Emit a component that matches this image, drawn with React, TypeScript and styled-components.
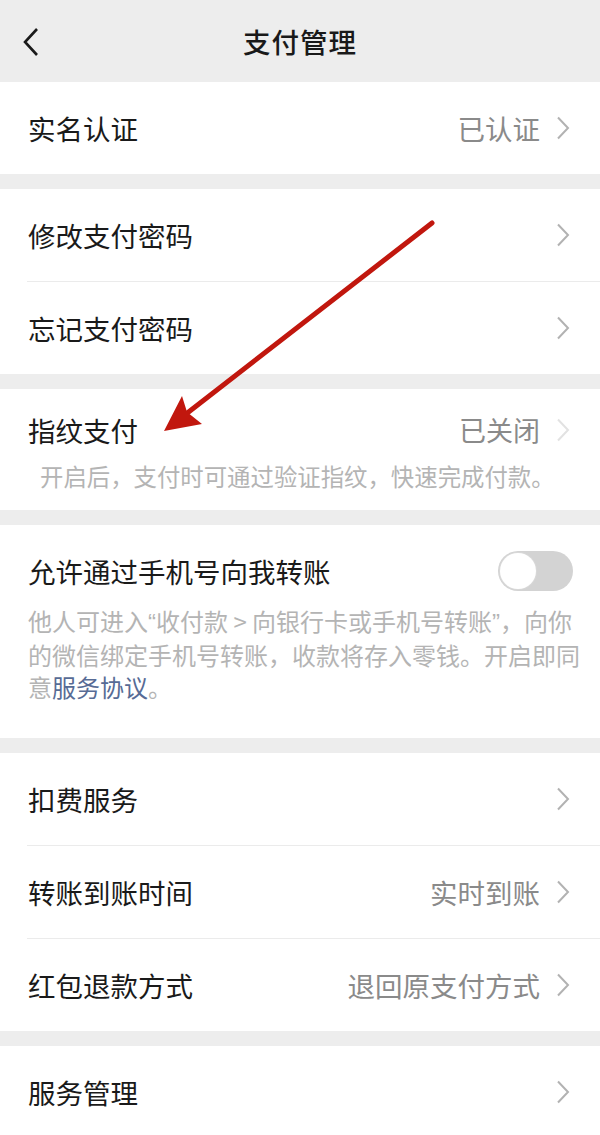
import React from "react";
import styled, { createGlobalStyle } from "styled-components";

const Global = createGlobalStyle`
  html, body { margin: 0; padding: 0; background: #ededed; }
  body { font-family: "Noto Sans CJK SC", "Noto Sans", "Liberation Sans", sans-serif; }
  * { box-sizing: border-box; }
`;

const Page = styled.div`
  position: relative;
  width: 600px;
  min-height: 1135px;
  background: #ededed;
  overflow: hidden;
`;

const Header = styled.div`
  height: 82px;
  display: grid;
  grid-template-columns: 80px 1fr 80px;
  align-items: center;
  background: #ededed;
`;

const BackBtn = styled.div`
  display: flex;
  align-items: center;
  padding-left: 22px;
  padding-top: 2px;
`;

const Title = styled.div`
  text-align: center;
  font-size: 27.5px;
  font-weight: 500;
  color: #191919;
  letter-spacing: 1px;
`;

const Section = styled.div`
  background: #fff;
  margin-bottom: 15px;
`;

const Row = styled.div`
  height: 92px;
  display: flex;
  align-items: center;
  padding: 0 30px 0 28px;
`;

const Divider = styled.div`
  height: 1px;
  margin-left: 27px;
  background: #ebebeb;
`;

const Label = styled.div`
  flex: 1;
  font-size: 27.5px;
  color: #1a1a1a;
  line-height: 34px;
`;

const Value = styled.div<{ $size?: number }>`
  font-size: ${(p) => p.$size ?? 27.5}px;
  color: #8a8a8a;
  margin-right: 16px;
  line-height: 34px;
`;

const ChevronSvg = styled.svg<{ $light?: boolean }>`
  width: 14px;
  height: 24px;
  flex: none;
  color: ${(p) => (p.$light ? "#e2e2e2" : "#b2b2b2")};
`;

const Chevron = ({ light }: { light?: boolean }) => (
  <ChevronSvg $light={light} viewBox="0 0 14 24" fill="none">
    <path d="M2 1.5 L12 12 L2 22.5" stroke="currentColor" strokeWidth="2" strokeLinejoin="miter" />
  </ChevronSvg>
);

const BlockSection = styled(Section)<{ $pt: number; $pb: number }>`
  padding: ${(p) => p.$pt}px 30px ${(p) => p.$pb}px 28px;
`;

const BlockHead = styled.div<{ $h: number }>`
  height: ${(p) => p.$h}px;
  display: flex;
  align-items: center;
`;

const Desc = styled.div<{ $indent?: number; $mt: number }>`
  margin-top: ${(p) => p.$mt}px;
  margin-right: -30px;
  padding-left: ${(p) => p.$indent ?? 0}px;
  font-size: 24px;
  line-height: 32px;
  color: #b4b4b4;
  white-space: nowrap;
`;

const SmallDesc = styled(Desc)`
  font-size: 23.4px;
`;

const Quote = styled.span`
  font-family: "Liberation Sans", sans-serif;
`;

const Link = styled.span`
  color: #576b95;
`;

const Toggle = styled.div`
  width: 75px;
  height: 40px;
  border-radius: 20px;
  background: #d3d3d3;
  position: relative;
  flex: none;
  margin-right: -3px;
`;

const Knob = styled.div`
  position: absolute;
  left: 2px;
  top: 2px;
  width: 36px;
  height: 36px;
  border-radius: 50%;
  background: #fff;
  box-shadow: 0 0 0 1px #d8d8d8;
`;

const ArrowOverlay = styled.svg`
  position: absolute;
  left: 0;
  top: 0;
  width: 600px;
  height: 1135px;
  pointer-events: none;
`;

export default function App() {
  return (
    <>
      <Global />
      <Page>
        <Header>
          <BackBtn>
            <svg width="18" height="30" viewBox="0 0 18 30" fill="none">
              <path d="M15 2 L3 15 L15 28" stroke="#1a1a1a" strokeWidth="2.6" />
            </svg>
          </BackBtn>
          <Title>支付管理</Title>
          <div />
        </Header>

        <Section>
          <Row>
            <Label>实名认证</Label>
            <Value>已认证</Value>
            <Chevron />
          </Row>
        </Section>

        <Section>
          <Row>
            <Label>修改支付密码</Label>
            <Chevron />
          </Row>
          <Divider />
          <Row>
            <Label>忘记支付密码</Label>
            <Chevron />
          </Row>
        </Section>

        <BlockSection $pt={24} $pb={18}>
          <BlockHead $h={34}>
            <Label>指纹支付</Label>
            <Value $size={27}>已关闭</Value>
            <Chevron light />
          </BlockHead>
          <SmallDesc $indent={12} $mt={13}>
            开启后，支付时可通过验证指纹，快速完成付款。
          </SmallDesc>
        </BlockSection>

        <BlockSection $pt={26} $pb={35}>
          <BlockHead $h={40}>
            <Label>允许通过手机号向我转账</Label>
            <Toggle>
              <Knob />
            </Toggle>
          </BlockHead>
          <Desc $mt={14}>
            他人可进入<Quote>“</Quote>收付款 &gt; 向银行卡或手机号转账<Quote>”</Quote>，向你
            <br />
            的微信绑定手机号转账，收款将存入零钱。开启即同
            <br />
            意<Link>服务协议</Link>。
          </Desc>
        </BlockSection>

        <Section>
          <Row>
            <Label>扣费服务</Label>
            <Chevron />
          </Row>
          <Divider />
          <Row>
            <Label>转账到账时间</Label>
            <Value>实时到账</Value>
            <Chevron />
          </Row>
          <Divider />
          <Row>
            <Label>红包退款方式</Label>
            <Value>退回原支付方式</Value>
            <Chevron />
          </Row>
        </Section>

        <Section>
          <Row>
            <Label>服务管理</Label>
            <Chevron />
          </Row>
        </Section>

        <ArrowOverlay viewBox="0 0 600 1135">
          <line x1="432" y1="223" x2="186" y2="414" stroke="#c1170e" strokeWidth="5" strokeLinecap="round" />
          <polygon points="164,431 182,396 187,412 202,424" fill="#c1170e" />
        </ArrowOverlay>
      </Page>
    </>
  );
}
